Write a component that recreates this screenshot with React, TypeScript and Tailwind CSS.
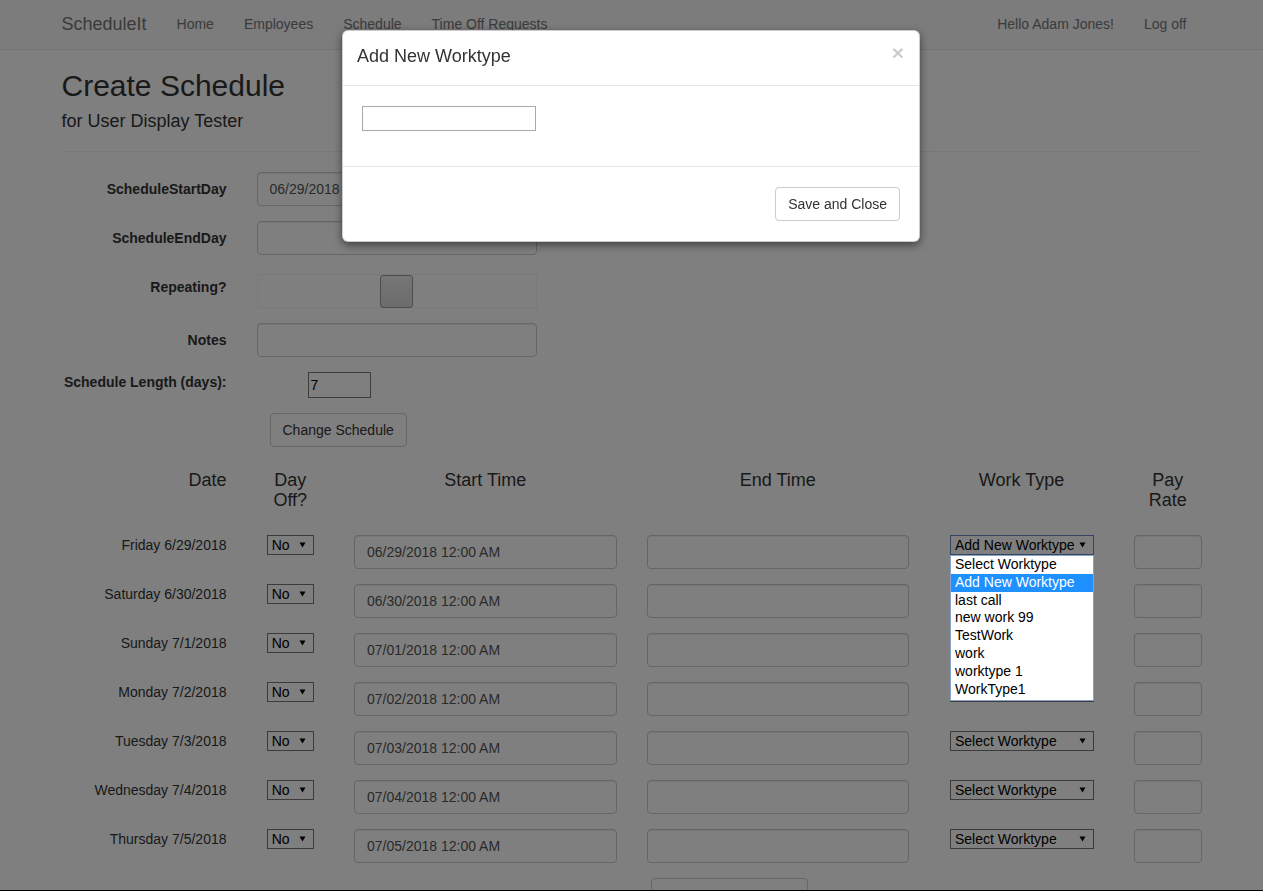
import React from "react";

const rows = [
  { day: "Friday 6/29/2018", start: "06/29/2018 12:00 AM", work: "Add New Worktype", open: true },
  { day: "Saturday 6/30/2018", start: "06/30/2018 12:00 AM", work: "Select Worktype" },
  { day: "Sunday 7/1/2018", start: "07/01/2018 12:00 AM", work: "Select Worktype" },
  { day: "Monday 7/2/2018", start: "07/02/2018 12:00 AM", work: "Select Worktype" },
  { day: "Tuesday 7/3/2018", start: "07/03/2018 12:00 AM", work: "Select Worktype" },
  { day: "Wednesday 7/4/2018", start: "07/04/2018 12:00 AM", work: "Select Worktype" },
  { day: "Thursday 7/5/2018", start: "07/05/2018 12:00 AM", work: "Select Worktype" },
];

const options = [
  "Select Worktype",
  "Add New Worktype",
  "last call",
  "new work 99",
  "TestWork",
  "work",
  "worktype 1",
  "WorkType1",
];

function Arrow() {
  return (
    <svg width="7" height="6" viewBox="0 0 7 6" className="shrink-0">
      <path d="M0.5 0.5h6L3.5 5.5z" fill="#000" />
    </svg>
  );
}

function FakeSelect({ text, className }: { text: string; className: string }) {
  return (
    <div
      className={`flex h-[20px] items-center justify-between bg-white pl-[4px] pr-[7px] text-[14px] leading-[18px] text-black ${className}`}
    >
      <span className="whitespace-nowrap">{text}</span>
      <Arrow />
    </div>
  );
}

const formCtl =
  "h-[34px] rounded-[4px] border border-[#cccccc] bg-white px-[12px] py-[6px] text-[14px] leading-[20px] text-[#555555] shadow-[inset_0_1px_1px_rgba(0,0,0,0.075)]";

export default function App() {
  return (
    <div className="relative min-h-screen bg-white font-['Liberation_Sans',Arial,Helvetica,sans-serif] text-[14px] leading-[20px] text-[#333333]">
      {/* Navbar */}
      <nav className="h-[50px] border-b border-[#e7e7e7] bg-[#f8f8f8]">
        <div className="mx-auto flex h-full w-[1170px] items-center px-[15px] pb-[2px] text-[#777777]">
          <span className="pr-[15px] text-[18px] leading-[20px]">ScheduleIt</span>
          <span className="px-[15px]">Home</span>
          <span className="px-[15px]">Employees</span>
          <span className="px-[15px]">Schedule</span>
          <span className="px-[15px]">Time Off Requests</span>
          <div className="ml-auto flex">
            <span className="px-[15px]">Hello Adam Jones!</span>
            <span className="px-[15px]">Log off</span>
          </div>
        </div>
      </nav>

      <div className="mx-auto w-[1170px]">
        <div className="px-[15px]">
          <h2 className="mt-[19px] text-[30px] leading-[33px]">Create Schedule</h2>
          <h4 className="mt-[9px] text-[18px] leading-[20px]">for User Display Tester</h4>
          <hr className="mt-[20px] border-t border-[#eeeeee]" />
        </div>

        {/* Form */}
        <div className="mt-[20px] flex flex-col">
          <div className="mb-[15px] flex">
            <label className="w-[195px] px-[15px] pt-[7px] text-right font-bold">ScheduleStartDay</label>
            <div className="px-[15px]">
              <div className={`${formCtl} w-[280px]`}>06/29/2018</div>
            </div>
          </div>
          <div className="mb-[15px] flex">
            <label className="w-[195px] px-[15px] pt-[7px] text-right font-bold">ScheduleEndDay</label>
            <div className="px-[15px]">
              <div className={`${formCtl} w-[280px]`}></div>
            </div>
          </div>
          <div className="mb-[15px] flex">
            <label className="w-[195px] px-[15px] pt-[7px] text-right font-bold">Repeating?</label>
            <div className="px-[15px] pt-[4px]">
              <div className="flex h-[34px] w-[280px] items-center justify-center border border-[#f3f3f3]">
                <div className="h-[33px] w-[33px] rounded-[3px] border border-[#9a9a9a] bg-linear-to-b from-[#ececec] to-[#d8d8d8]"></div>
              </div>
            </div>
          </div>
          <div className="mb-[15px] flex">
            <label className="w-[195px] px-[15px] pt-[7px] text-right font-bold">Notes</label>
            <div className="px-[15px]">
              <div className={`${formCtl} w-[280px]`}></div>
            </div>
          </div>
          <div className="flex">
            <label className="w-[195px] px-[15px] text-right font-bold">Schedule Length (days):</label>
            <div className="pl-[66px]">
              <div className="flex h-[26px] w-[63px] items-center border border-[#7a7a7a] bg-white pl-[2px] text-[14px] text-black">
                7
              </div>
            </div>
          </div>
          <div className="mt-[15px] flex pl-[223px]">
            <button className="h-[34px] rounded-[4px] border border-[#cccccc] bg-white px-[12px] text-[14px] text-[#333333]">
              Change Schedule
            </button>
          </div>
        </div>

        {/* Table header */}
        <div className="mt-[24px] flex text-[18px] leading-[19.5px]">
          <div className="w-[195px] px-[15px] text-right">Date</div>
          <div className="w-[97.5px] px-[15px] text-center">Day Off?</div>
          <div className="w-[292.5px] px-[15px] text-center">Start Time</div>
          <div className="w-[292.5px] px-[15px] text-center">End Time</div>
          <div className="w-[195px] px-[15px] text-center">Work Type</div>
          <div className="w-[97.5px] px-[15px] text-center">Pay Rate</div>
        </div>

        {/* Rows */}
        <div className="mt-[25px] flex flex-col">
          {rows.map((r) => (
            <div key={r.day} className="mb-[15px] flex h-[34px]">
              <div className="w-[195px] px-[15px] text-right">{r.day}</div>
              <div className="flex w-[97.5px] justify-center px-[15px]">
                <FakeSelect text="No" className="w-[47px] border border-[#767676]" />
              </div>
              <div className="w-[292.5px] px-[15px]">
                <div className={`${formCtl} w-full`}>{r.start}</div>
              </div>
              <div className="w-[292.5px] px-[15px]">
                <div className={`${formCtl} w-full`}></div>
              </div>
              <div className="flex w-[195px] justify-center px-[15px] pl-[16px]">
                <div className="relative">
                  <FakeSelect
                    text={r.work}
                    className={r.open ? "w-[144px] border border-[#6a8cc4]" : "w-[144px] border border-[#767676]"}
                  />
                  {r.open && (
                    <div className="absolute left-0 top-[20px] z-50 w-[144px] border border-[#8aa4c8] bg-white pb-[2px] text-[14px] leading-[16px] text-black">
                      {options.map((o) => (
                        <div
                          key={o}
                          className={
                            o === "Add New Worktype"
                              ? "h-[17.8px] whitespace-nowrap bg-[#1e90ff] pl-[4px] text-white"
                              : "h-[17.8px] whitespace-nowrap pl-[4px]"
                          }
                        >
                          {o}
                        </div>
                      ))}
                    </div>
                  )}
                </div>
              </div>
              <div className="w-[97.5px] px-[15px]">
                <div className={`${formCtl} w-full`}></div>
              </div>
            </div>
          ))}
          <div className="flex pl-[604px]">
            <button className="block h-[34px] w-[157px] rounded-[4px] border border-[#cccccc] bg-white px-[12px] pt-[10px] text-[14px] leading-[20px] text-[#333333]">
              <span className="block pt-[4px]">Save Schedule</span>
            </button>
          </div>
          <div className="h-[40px]"></div>
        </div>
      </div>

      {/* Backdrop */}
      <div className="fixed inset-0 z-40 bg-black/50"></div>

      {/* Modal */}
      <div className="fixed left-[342px] top-[30px] z-50 w-[578px] rounded-[6px] border border-black/20 bg-white shadow-[0_3px_9px_rgba(0,0,0,0.5)]">
        <div className="relative border-b border-[#e5e5e5] pb-[15px] pl-[14px] pr-[15px] pt-[13px]">
          <h4 className="text-[18px] leading-[25.7px] text-[#333333]">Add New Worktype</h4>
          <span className="absolute right-[15px] top-[11px] text-[21px] font-bold leading-[21px] text-black opacity-20">
            ×
          </span>
        </div>
        <div className="py-[20px] pl-[19px] pr-[20px]">
          <div className="h-[25px] w-[174px] border border-[#a9a9a9] bg-white"></div>
        </div>
        <div className="mt-[15px] flex justify-end border-t border-[#e5e5e5] pb-[20px] pl-[20px] pr-[19px] pt-[20px]">
          <button className="h-[34px] rounded-[4px] border border-[#cccccc] bg-white px-[12px] text-[14px] text-[#333333]">
            Save and Close
          </button>
        </div>
      </div>

      <div className="fixed bottom-0 left-0 right-0 z-50 h-px bg-black"></div>
    </div>
  );
}
